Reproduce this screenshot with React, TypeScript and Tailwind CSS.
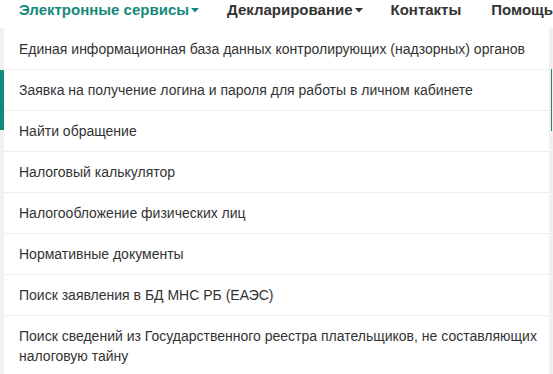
const items: string[] = [
  'Единая информационная база данных контролирующих (надзорных) органов',
  'Заявка на получение логина и пароля для работы в личном кабинете',
  'Найти обращение',
  'Налоговый калькулятор',
  'Налогообложение физических лиц',
  'Нормативные документы',
  'Поиск заявления в БД МНС РБ (ЕАЭС)',
  'Поиск сведений из Государственного реестра плательщиков, не составляющих налоговую тайну',
];

function Caret() {
  return (
    <svg width="8" height="5" viewBox="0 0 8 5" className="ml-[2px] mt-[1px]">
      <path d="M0 0 L8 0 L4 4.5 Z" fill="currentColor" />
    </svg>
  );
}

export default function App() {
  return (
    <div className="w-[553px] h-[374px] overflow-hidden bg-white font-['Liberation_Sans',Arial,sans-serif] relative">
      {/* Top nav */}
      <div className="h-[28px] flex items-start text-[15px] leading-[20px] font-bold whitespace-nowrap">
        <div className="flex items-center pl-[19px] text-[#16897c]">
          Электронные сервисы
          <Caret />
        </div>
        <div className="flex items-center ml-[28px] text-[#333]">
          Декларирование
          <Caret />
        </div>
        <div className="ml-[28px] text-[#333]">Контакты</div>
        <div className="ml-[30px] text-[#333]">Помощь</div>
      </div>

      {/* Page content behind the dropdown */}
      <div className="absolute left-0 right-0 top-[28px] bottom-0 bg-[#f1f1f1]">
        <div className="absolute left-0 top-[42px] w-[4px] h-[60px] bg-[#12897b]" />
        <div className="absolute right-[1px] top-[41px] w-[1px] h-[62px] bg-[#12897b]" />
      </div>

      {/* Dropdown */}
      <div className="absolute left-[4px] top-[28px] w-[545px] bg-white text-[14px] text-[#333] leading-[20px]">
        {items.map((t, i) => (
          <div
            key={i}
            className={
              i === items.length - 1
                ? 'pl-[15px] pr-[6px] pt-[10px] pb-[12px] border-t border-[#eeeeee]'
                : 'px-[15px] h-[41px] flex items-center border-t border-[#eeeeee] first:border-t-0'
            }
          >
            {t}
          </div>
        ))}
      </div>
    </div>
  );
}
